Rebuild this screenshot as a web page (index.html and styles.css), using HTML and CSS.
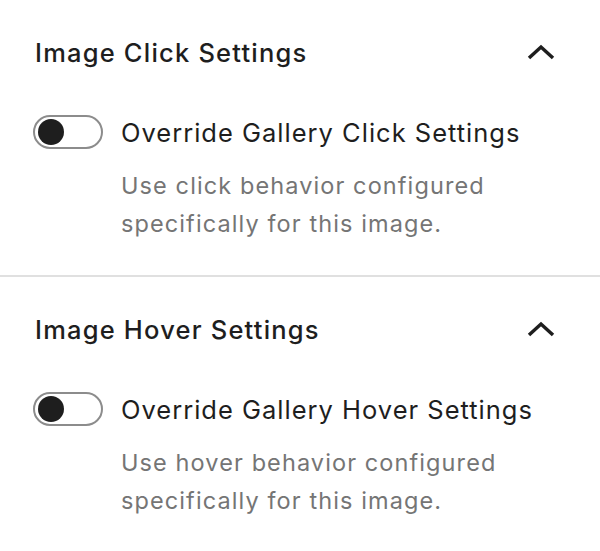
FILE: index.html
```html
<!DOCTYPE html>
<html lang="en">
<head>
  <meta charset="UTF-8" />
  <title>Image Settings</title>
  <link rel="stylesheet" href="styles.css">
</head>
<body>
  <div class="panel">
    <div class="panel-title">
      <span>Image Click Settings</span>
      <svg class="chevron" width="28" height="16" viewBox="0 0 28 16"><polyline points="2,14 14,3 26,14" /></svg>
    </div>
    <div class="toggle-row">
      <span class="toggle"><span class="knob"></span></span>
      <span class="toggle-label">Override Gallery Click Settings</span>
    </div>
    <p class="help">Use click behavior configured<br>specifically for this image.</p>
  </div>

  <div class="panel">
    <div class="panel-title">
      <span>Image Hover Settings</span>
      <svg class="chevron" width="28" height="16" viewBox="0 0 28 16"><polyline points="2,14 14,3 26,14" /></svg>
    </div>
    <div class="toggle-row">
      <span class="toggle"><span class="knob"></span></span>
      <span class="toggle-label">Override Gallery Hover Settings</span>
    </div>
    <p class="help">Use hover behavior configured<br>specifically for this image.</p>
  </div>
</body>
</html>
```

FILE: styles.css
```css
body {
  margin: 0;
  background: #fff;
  font-family: Inter, 'Noto Sans', sans-serif;
  color: #1e1e1e;
}

.panel {
  padding: 36px 45px 32px 35px;
  border-bottom: 2px solid #e0e0e0;
}

.panel-title {
  display: flex;
  align-items: center;
  justify-content: space-between;
  height: 32px;
  font-size: 25.5px;
  font-weight: 500;
  letter-spacing: 1.2px;
}

.chevron {
  fill: none;
  stroke: #1e1e1e;
  stroke-width: 3.5;
}

.toggle-row {
  display: flex;
  align-items: center;
  margin-top: 46px;
  margin-left: -2px;
  height: 36px;
}

.toggle {
  box-sizing: border-box;
  width: 70px;
  height: 34px;
  border: 2px solid #8c8c8c;
  border-radius: 17px;
  padding: 2px 3px;
  margin-right: 18px;
  display: flex;
  align-items: center;
}

.knob {
  width: 26px;
  height: 26px;
  border-radius: 50%;
  background: #1e1e1e;
}

.toggle-label {
  font-size: 25.5px;
  letter-spacing: 1px;
}

.help {
  margin: 17px 0 0 86px;
  font-size: 23.5px;
  line-height: 38px;
  letter-spacing: 1.1px;
  color: #757575;
}
```
